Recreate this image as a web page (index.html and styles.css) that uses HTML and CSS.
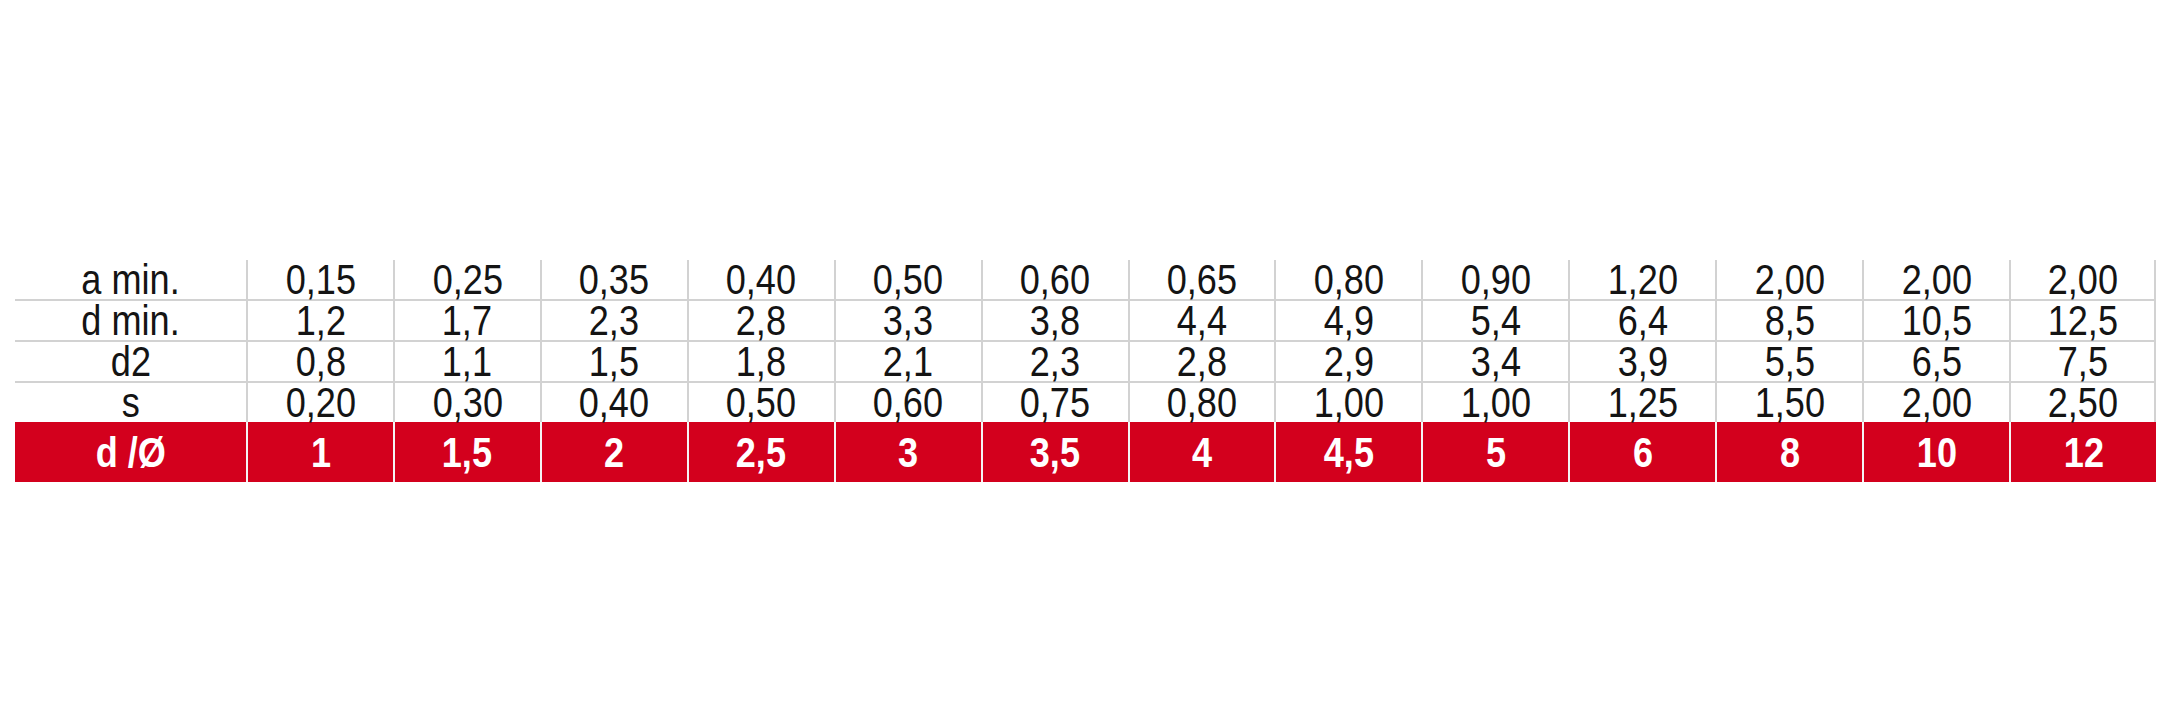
FILE: index.html
```html
<!DOCTYPE html>
<html lang="de">
<head>
<meta charset="utf-8">
<title>Tabelle</title>
<link rel="stylesheet" href="styles.css">
</head>
<body>
<div class="table">
  <div class="row">
    <div class="cell label"><span>a min.</span></div>
    <div class="cell"><span>0,15</span></div><div class="cell"><span>0,25</span></div><div class="cell"><span>0,35</span></div><div class="cell"><span>0,40</span></div><div class="cell"><span>0,50</span></div><div class="cell"><span>0,60</span></div><div class="cell"><span>0,65</span></div><div class="cell"><span>0,80</span></div><div class="cell"><span>0,90</span></div><div class="cell"><span>1,20</span></div><div class="cell"><span>2,00</span></div><div class="cell"><span>2,00</span></div><div class="cell"><span>2,00</span></div>
  </div>
  <div class="row">
    <div class="cell label"><span>d min.</span></div>
    <div class="cell"><span>1,2</span></div><div class="cell"><span>1,7</span></div><div class="cell"><span>2,3</span></div><div class="cell"><span>2,8</span></div><div class="cell"><span>3,3</span></div><div class="cell"><span>3,8</span></div><div class="cell"><span>4,4</span></div><div class="cell"><span>4,9</span></div><div class="cell"><span>5,4</span></div><div class="cell"><span>6,4</span></div><div class="cell"><span>8,5</span></div><div class="cell"><span>10,5</span></div><div class="cell"><span>12,5</span></div>
  </div>
  <div class="row">
    <div class="cell label"><span>d2</span></div>
    <div class="cell"><span>0,8</span></div><div class="cell"><span>1,1</span></div><div class="cell"><span>1,5</span></div><div class="cell"><span>1,8</span></div><div class="cell"><span>2,1</span></div><div class="cell"><span>2,3</span></div><div class="cell"><span>2,8</span></div><div class="cell"><span>2,9</span></div><div class="cell"><span>3,4</span></div><div class="cell"><span>3,9</span></div><div class="cell"><span>5,5</span></div><div class="cell"><span>6,5</span></div><div class="cell"><span>7,5</span></div>
  </div>
  <div class="row last">
    <div class="cell label"><span>s</span></div>
    <div class="cell"><span>0,20</span></div><div class="cell"><span>0,30</span></div><div class="cell"><span>0,40</span></div><div class="cell"><span>0,50</span></div><div class="cell"><span>0,60</span></div><div class="cell"><span>0,75</span></div><div class="cell"><span>0,80</span></div><div class="cell"><span>1,00</span></div><div class="cell"><span>1,00</span></div><div class="cell"><span>1,25</span></div><div class="cell"><span>1,50</span></div><div class="cell"><span>2,00</span></div><div class="cell"><span>2,50</span></div>
  </div>
  <div class="row head">
    <div class="cell label"><span>d /Ø</span></div>
    <div class="cell"><span>1</span></div><div class="cell"><span>1,5</span></div><div class="cell"><span>2</span></div><div class="cell"><span>2,5</span></div><div class="cell"><span>3</span></div><div class="cell"><span>3,5</span></div><div class="cell"><span>4</span></div><div class="cell"><span>4,5</span></div><div class="cell"><span>5</span></div><div class="cell"><span>6</span></div><div class="cell"><span>8</span></div><div class="cell"><span>10</span></div><div class="cell"><span>12</span></div>
  </div>
</div>
</body>
</html>
```
FILE: styles.css
```css
html, body {
  margin: 0;
  padding: 0;
  background: #ffffff;
}

body {
  font-family: "Liberation Sans", Arial, sans-serif;
  color: #141414;
}

.table {
  margin: 260px 0 0 15px;
  width: 2141px;
}

.row {
  display: grid;
  grid-template-columns: 231px repeat(13, 1fr);
  height: 41px;
  border-bottom: 2px solid #d2d2d2;
  box-sizing: border-box;
}

.row.last {
  height: 39px;
  border-bottom: none;
}

.cell {
  font-size: 43px;
  line-height: 39px;
  height: 39px;
  text-align: center;
  border-left: 2px solid #d2d2d2;
  white-space: nowrap;
}

.cell span {
  display: inline-block;
  transform: scaleX(0.84);
  transform-origin: center;
}

.cell.label {
  border-left: none;
}

.row .cell:last-child {
  border-right: 2px solid #d2d2d2;
}

.row.head {
  height: 60px;
  border-bottom: none;
}

.row.head .cell {
  height: 60px;
  background: #d3001d;
  color: #ffffff;
  font-weight: bold;
  line-height: 60px;
  border-left: 2px solid #f4f4f4;
  border-right: none;
}

.row.head .cell.label {
  border-left: none;
}
```
